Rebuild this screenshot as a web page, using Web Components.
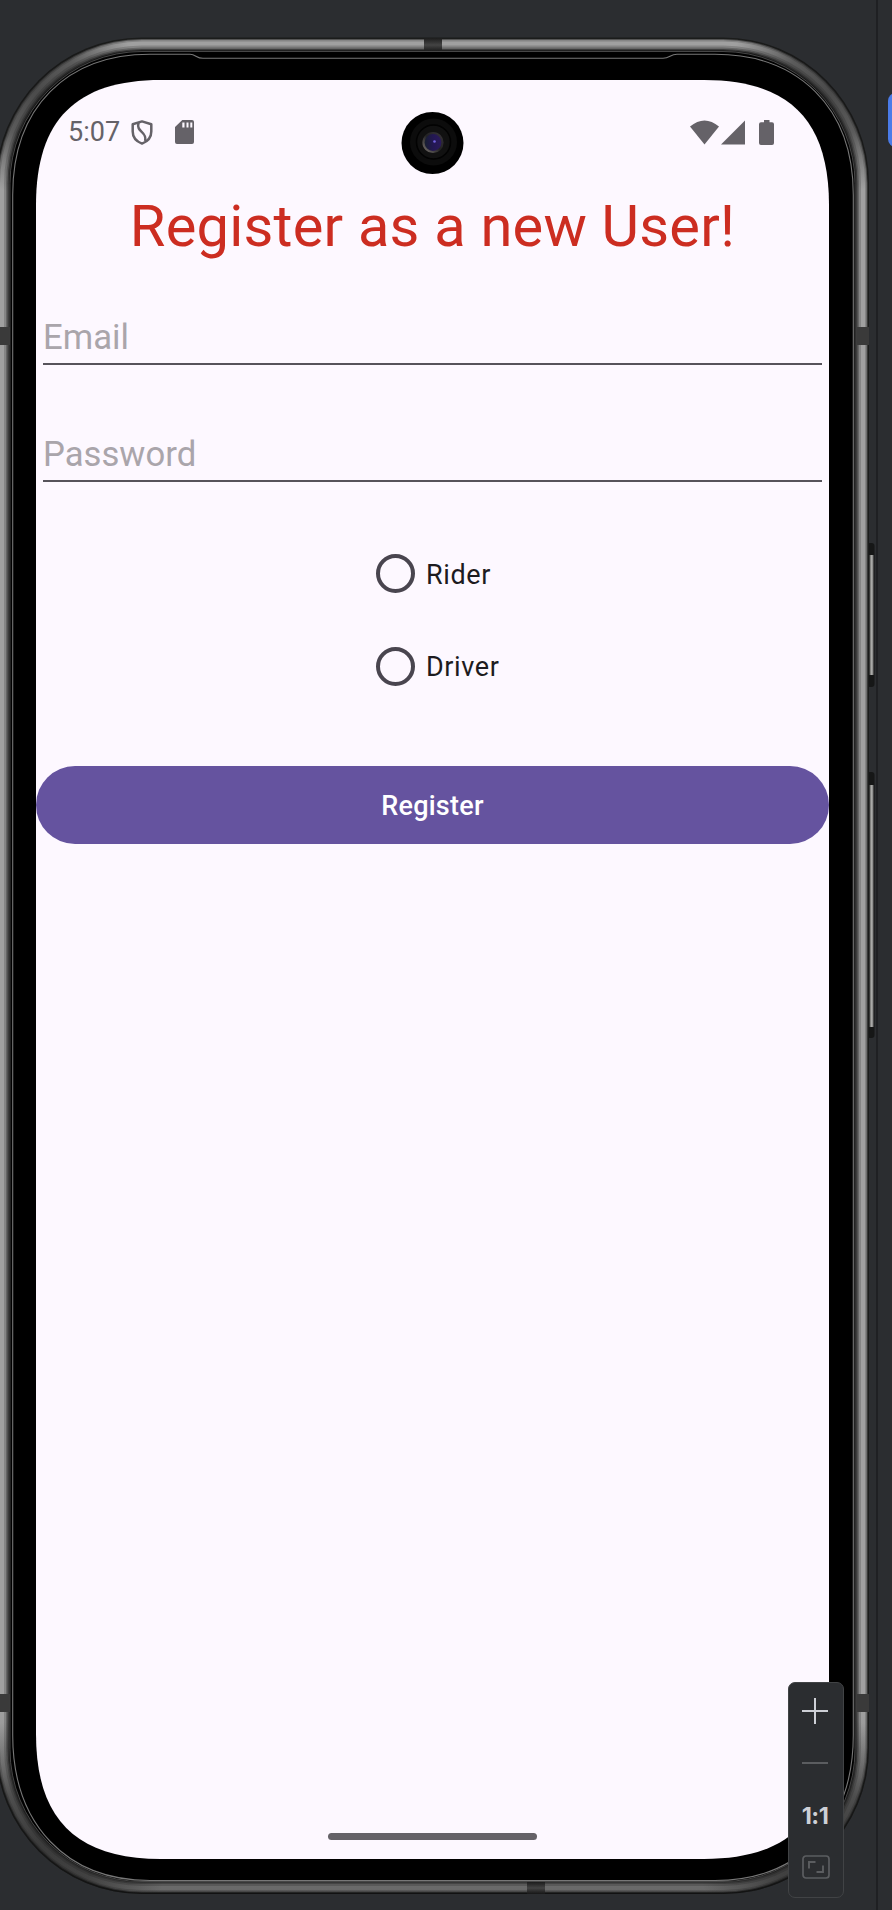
<!DOCTYPE html>
<html lang="en">
<head>
<meta charset="utf-8">
<title>Register</title>
<style>
html,body{margin:0;height:1910px;width:892px;overflow:hidden;background:#2b2d30;font-family:Roboto,sans-serif}
</style>
</head>
<body>
<emulator-window>
  <phone-device>
    <status-bar time="5:07"></status-bar>
    <register-screen>
      <page-title>Register as a new User!</page-title>
      <text-field>Email</text-field>
      <text-field>Password</text-field>
      <radio-option>Rider</radio-option>
      <radio-option>Driver</radio-option>
      <filled-button>Register</filled-button>
    </register-screen>
    <home-indicator></home-indicator>
  </phone-device>
  <zoom-toolbar slot="tools"></zoom-toolbar>
</emulator-window>
<script>
const define=(name,html,setup)=>customElements.define(name,class extends HTMLElement{
  constructor(){
    super();
    const t=document.createElement('template');
    t.innerHTML=html;
    this.attachShadow({mode:'open'}).append(t.content.cloneNode(true));
  }
  connectedCallback(){ if(setup) setup(this,this.shadowRoot); }
});

define('emulator-window',`
<style>
:host{display:block;position:relative;width:892px;height:1910px;overflow:hidden;background:#2b2d30}
.divider{position:absolute;left:876px;top:0;width:2px;height:1910px;background:#1f2023}
.edge{position:absolute;left:888px;top:93px;width:20px;height:54px;border-radius:8px;background:#4a7be8}
.tools{position:absolute;left:788px;top:1682px}
</style>
<div class="divider"></div><div class="edge"></div>
<slot></slot><div class="tools"><slot name="tools"></slot></div>`);

define('phone-device',`
<style>
:host{display:block;position:relative;box-sizing:border-box;width:892px;height:1910px;padding:80px 63px 51px 36px}
svg{position:absolute;left:0;top:0}
.content{position:relative;display:flex;flex-direction:column;height:1779px}
</style>
<svg width="892" height="1910" viewBox="0 0 892 1910">
  <defs>
    <linearGradient id="v" x1="0" y1="0" x2="0" y2="1"><stop offset="0" stop-color="#000" stop-opacity="0"/><stop offset=".9" stop-color="#000" stop-opacity="0"/><stop offset="1" stop-color="#000" stop-opacity=".35"/></linearGradient>
    <radialGradient id="d"><stop offset="0" stop-color="#161616" stop-opacity=".62"/><stop offset=".45" stop-color="#161616" stop-opacity=".5"/><stop offset="1" stop-color="#161616" stop-opacity="0"/></radialGradient>
    <linearGradient id="btn"><stop offset="0" stop-color="#5a5a58"/><stop offset=".5" stop-color="#aaaaa8"/><stop offset="1" stop-color="#777"/></linearGradient>
    <linearGradient id="tab" x1="0" y1="0" x2="0" y2="1"><stop offset="0" stop-color="#1c1c1c"/><stop offset=".5" stop-color="#444"/><stop offset="1" stop-color="#161616"/></linearGradient>
    <linearGradient id="lens" x1="0" y1="0" x2="1" y2="0"><stop offset="0" stop-color="#16202c"/><stop offset=".5" stop-color="#231752"/><stop offset="1" stop-color="#2b1a5c"/></linearGradient>
    <linearGradient id="rim" x1="0" y1="1" x2="1" y2="0"><stop offset="0" stop-color="#77716f"/><stop offset=".5" stop-color="#222"/><stop offset="1" stop-color="#38343a"/></linearGradient>
    <clipPath id="body"><rect x="-4" y="37.5" width="873" height="1856.5" rx="146"/></clipPath>
  </defs>
  <!-- side keys -->
  <g fill="#161717"><rect x="867" y="543" width="7.500" height="144" rx="3"/><rect x="867" y="772" width="7.500" height="266" rx="3"/></g>
  <g fill="url(#btn)"><rect x="869.5" y="555" width="4" height="120"/><rect x="869.5" y="785" width="4" height="242"/></g>
  <!-- metal band, built from nested outlines -->
  <g>
    <rect x="-4" y="37.5" width="873" height="1856.5" rx="146" fill="#1b1c1b"/>
    <rect x="-2.5" y="39" width="870" height="1853.5" rx="144.5" fill="#555"/>
    <rect x="-1.5" y="40" width="868" height="1851.5" rx="143.5" fill="#858585"/>
    <rect x="0" y="41.500" width="865" height="1848.500" rx="142" fill="#a0a0a0"/>
    <rect x="4" y="45.500" width="857" height="1840.500" rx="138" fill="#858585"/>
    <rect x="6" y="47.500" width="853" height="1836.500" rx="136" fill="#656565"/>
    <rect x="7.500" y="49" width="850" height="1833.500" rx="134.500" fill="#3c3c3c"/>
    <rect x="9" y="50.300" width="847" height="1831.500" rx="133" fill="#161616"/>
  </g>
  <g clip-path="url(#body)">
    <rect x="-4" y="37" width="873" height="1857" fill="url(#v)"/>
    <g fill="url(#d)"><circle cx="34" cy="90" r="105"/><circle cx="831" cy="90" r="105"/><circle cx="38" cy="1848" r="130"/><circle cx="827" cy="1848" r="130"/></g>
    <rect x="424" y="38" width="18" height="14" fill="url(#tab)"/>
    <rect x="527" y="1882" width="18" height="12" fill="url(#tab)"/>
    <g fill="#3a3a3a"><rect x="-4" y="327" width="13.500" height="18"/><rect x="857" y="327" width="12" height="18"/><rect x="-4" y="1694" width="13.500" height="18"/><rect x="857" y="1694" width="12" height="18"/></g>
  </g>
  <rect x="10" y="51.500" width="845" height="1830" rx="132" fill="#000" stroke="#606060"  stroke-width=".7"/>
  <path d="M12.700 195C12.700 107 67 54.300 150 54.300H190C196 54.300 196 58.300 203 58.300H663C670 58.300 670 54.300 677 54.300H715C798 54.300 853.300 107 853.300 195V1735C853.300 1825 798 1880.500 715 1880.500H150C67 1880.500 12.700 1825 12.700 1735Z" fill="#000" stroke="#777" stroke-width="1.100"/>
  <path d="M36 205C36 120 76 80 161 80H704C789 80 829 120 829 205V1734C829 1819 789 1859 704 1859H161C76 1859 36 1819 36 1734Z" fill="#fdf8ff"/>
  <!-- front camera -->
  <circle cx="432.500" cy="143" r="31" fill="#000"/><circle cx="433.500" cy="142" r="23.500" fill="#0c0c0c"/>
  <circle cx="433.500" cy="142" r="17" fill="#111" stroke="#020202" stroke-width="1.500"/>
  <circle cx="433" cy="142.500" r="9.500" fill="url(#lens)" stroke="url(#rim)" stroke-width="2.200"/>
  <circle cx="434.500" cy="141.500" r="1.300" fill="#7261df"/>
</svg>
<div class="content"><slot></slot></div>`);

define('status-bar',`
<style>
:host{display:flex;align-items:center;box-sizing:border-box;height:104px;padding:0 55px 0 32px;color:#656268}
span{font-size:27px;line-height:32px;width:63px;white-space:nowrap}
.gap{flex:1}
svg{display:block;fill:currentColor}
</style>
<span></span>
<svg width="22" height="25" viewBox="0 0 22 25" style="margin-right:22px"><path d="M11 1.400L20.300 4.300V11.500C20.300 17.500 16.500 21.500 11 23.600C5.500 21.500 1.700 17.500 1.700 11.500V4.300Z" fill="none" stroke="currentColor" stroke-width="2.500" stroke-linejoin="round"/><path d="M7.500 2.500C5 13 16 10.500 14.200 21" fill="none" stroke="currentColor" stroke-width="2.500"/></svg>
<svg width="19" height="24" viewBox="0 0 19 24"><path fill-rule="evenodd" d="M7.300 0H17Q19 0 19 2V22Q19 24 17 24H2Q0 24 0 22V7ZM7.300 2.500V7.500H9.500V2.500ZM11.500 2.500V7.500H13.500V2.500ZM15.300 2.500V7.500H17.300V2.500Z"/></svg>
<div class="gap"></div>
<svg width="29" height="25" viewBox="0 0 29 25"><path d="M0 6.500Q14.500 -5.500 29 6.500L14.500 24.500Z"/></svg>
<svg width="24" height="25" viewBox="0 0 24 25" style="margin:0 14px 0 2px"><path d="M24 0.500V24.500H0Z"/></svg>
<svg width="15" height="25" viewBox="0 0 15 25"><path d="M5 0H10.500V2.300H13Q15 2.300 15 4.300V23Q15 25 13 25H2Q0 25 0 23V4.300Q0 2.300 2 2.300H5Z"/></svg>`,
(h,r)=>{r.querySelector('span').textContent=h.getAttribute('time')});

define('register-screen',`
<style>:host{display:flex;flex-direction:column;flex:1}</style><slot></slot>`);

define('page-title',`
<style>:host{display:block;box-sizing:border-box;height:82px;padding-top:1px;line-height:82px;text-align:center;font-size:57.800px;letter-spacing:.22px;color:#cc2d21;white-space:nowrap}</style><slot></slot>`);

define('text-field',`
<style>
:host{display:block;height:87px;margin:12px 7px 18px}
div{box-sizing:border-box;height:87px;padding-top:39px;border-bottom:2px solid #57535b;font-size:34.700px;line-height:40px;color:#aaa5ab}
</style><div><slot></slot></div>`);

define('radio-option',`
<style>
:host{display:flex;align-items:center;height:92.500px;margin-left:339.500px;position:relative;top:27.500px;font-size:27px;color:#1d1b20;letter-spacing:.6px}
i{box-sizing:border-box;width:39px;height:39px;border:4px solid #49454f;border-radius:50%;margin-right:11.500px}
span{padding-top:2px}
</style><i></i><span><slot></slot></span>`);

define('filled-button',`
<style>
:host{display:block;margin-top:81px}
button{display:block;width:100%;height:78px;border:0;border-radius:39px;padding:2px 0 0;background:#65539f;color:#fff;font:500 27px/76px Roboto,sans-serif;letter-spacing:.25px}
</style><button><slot></slot></button>`);

define('home-indicator',`
<style>:host{display:block;width:209px;height:7px;border-radius:4px;background:#656268;margin:0 auto 19px}</style>`);

define('zoom-toolbar',`
<style>
:host{box-sizing:border-box;display:flex;flex-direction:column;align-items:center;width:56px;height:216px;padding-right:2px;border:1.500px solid #414345;border-radius:7px;background:#2b2d30;color:#ced0d6}
svg{display:block;fill:none}
b{font:700 23.500px/28px Inter,sans-serif;letter-spacing:-.5px;margin:38px 0 25px}
</style>
<svg width="26" height="26" viewBox="0 0 26 26" style="margin-top:15px"><path d="M13 0V26M0 13H26" stroke="#ced0d6" stroke-width="2"/></svg>
<svg width="26" height="2" viewBox="0 0 26 2" style="margin-top:38px"><path d="M0 1H26" stroke="#5b5d60" stroke-width="2"/></svg>
<b>1:1</b>
<svg width="28" height="24" viewBox="0 0 28 24" style="margin-left:2px"><rect x="1" y="1" width="26" height="22" rx="3" stroke="#5b5d60" stroke-width="1.700"/><path d="M7 13.500V7H13.500M21 10.500V17H14.500" stroke="#5b5d60" stroke-width="1.900"/></svg>`);
</script>
</body>
</html>
